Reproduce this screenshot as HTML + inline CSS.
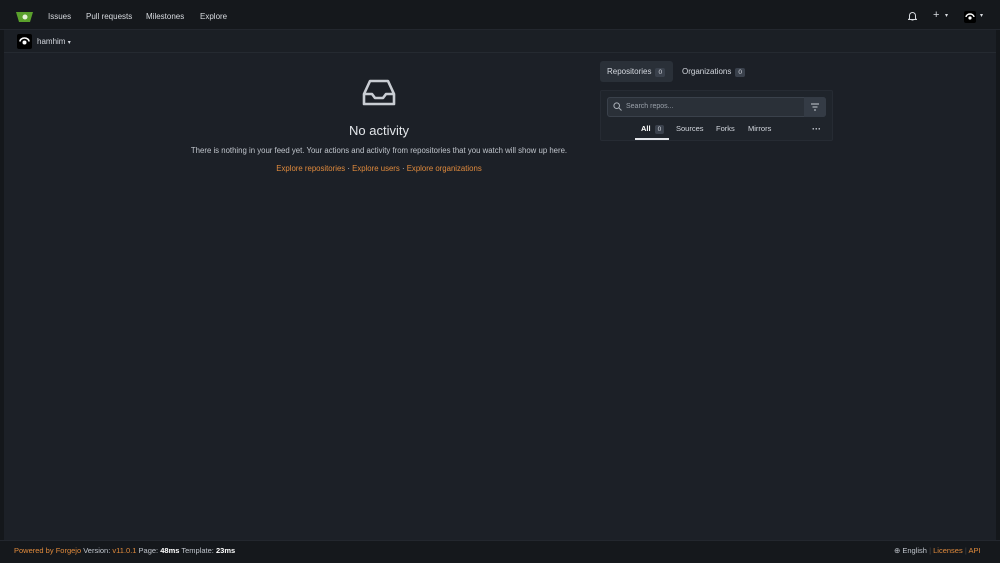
<!DOCTYPE html><html><head><style>
*{box-sizing:border-box;margin:0;padding:0}
body{width:1000px;height:563px;background:#14171b;font-family:"Liberation Sans",sans-serif;color:#d3d7de;font-size:8px;position:relative;overflow:hidden}
.main{position:absolute;left:4px;top:30px;width:992px;height:510px;background:#1c2027}
.nav{position:absolute;left:0;top:0;width:1000px;height:30px;background:#15181c;border-bottom:1px solid #23272e}
.nav span{position:absolute;top:12px;font-size:8px;color:#d8dbe0}
.sub{position:absolute;left:4px;top:30px;width:992px;height:23px;border-bottom:1px solid #252a31;background:#1b1f25}
.foot{position:absolute;left:0;top:540px;width:1000px;height:23px;background:#15181c;border-top:1px solid #23272e}
.o{color:#e08a3c}
.badge{display:inline-block;background:#3a414c;color:#d3d7de;font-size:6.5px;padding:1px 3px;border-radius:2px;margin-left:4px}
</style></head><body>
<div class="main"></div>
<div class="nav">
<svg style="position:absolute;left:16px;top:11px" width="17" height="12" viewBox="0 0 17 12"><path d="M0 1h17l-3 10H3z" fill="#5aa02c"/><circle cx="9" cy="6" r="2.5" fill="#e6f2d8"/></svg>
<span style="left:48px">Issues</span><span style="left:86px">Pull requests</span><span style="left:146px">Milestones</span><span style="left:200px">Explore</span>
<svg style="position:absolute;left:908px;top:11px" width="9" height="10" viewBox="0 0 9 10"><path d="M1.5 7.5V4.5a3 3 0 016 0v3l1 1h-8zM3.5 9h2" stroke="#d8dbe0" fill="none" stroke-width="1"/></svg>
<span style="left:933px;top:9px;font-size:11px">+</span><span style="left:945px;top:12px;font-size:6px">▾</span>
<div style="position:absolute;left:964px;top:11px;width:12px;height:12px;background:#000;border-radius:2px"><svg width="12" height="12" viewBox="0 0 12 12"><path d="M2 6a4 3 0 018 0" stroke="#fff" fill="none" stroke-width="1.4"/><circle cx="6" cy="7" r="1.6" fill="#fff"/></svg></div>
<span style="left:980px;top:12px;font-size:6px">▾</span>
</div>
<div class="sub">
<div style="position:absolute;left:13px;top:4px;width:15px;height:15px;background:#000;border-radius:2px"><svg width="15" height="15" viewBox="0 0 15 15"><path d="M3 7.5a4.5 3.5 0 019 0" stroke="#fff" fill="none" stroke-width="1.6"/><circle cx="7.5" cy="8.5" r="2" fill="#fff"/></svg></div>
<span style="position:absolute;left:33px;top:7px;font-size:8px">hamhim <span style="font-size:6px">▾</span></span>
</div>
<svg style="position:absolute;left:362px;top:78px" width="34" height="30" viewBox="0 0 34 30"><path d="M2 16L8 3h18l6 13v10H2zM2 16h8l3 4h8l3-4h8" stroke="#c9cdd3" stroke-width="2.6" fill="none" stroke-linejoin="round"/></svg>
<div style="position:absolute;left:279px;top:123px;width:200px;text-align:center;font-size:13px;color:#e3e6ea">No activity</div>
<div style="position:absolute;left:179px;top:146px;width:400px;text-align:center;font-size:7.8px;color:#c0c5cc">There is nothing in your feed yet. Your actions and activity from repositories that you watch will show up here.</div>
<div style="position:absolute;left:179px;top:164px;width:400px;text-align:center;font-size:7.8px;color:#c0c5cc"><span class="o">Explore repositories</span> · <span class="o">Explore users</span> · <span class="o">Explore organizations</span></div>
<div style="position:absolute;left:600px;top:61px;width:73px;height:21px;background:#2a3038;border-radius:3px"></div>
<span style="position:absolute;left:607px;top:67px;font-size:8px">Repositories<span class="badge">0</span></span>
<span style="position:absolute;left:682px;top:67px;font-size:8px">Organizations<span class="badge">0</span></span>
<div style="position:absolute;left:600px;top:90px;width:233px;height:51px;background:#1f242b;border:1px solid #262b33;border-radius:2px"></div>
<div style="position:absolute;left:607px;top:97px;width:219px;height:20px;background:#2a3038;border:1px solid #3a414b;border-radius:3px"></div>
<div style="position:absolute;left:804px;top:97px;width:22px;height:20px;background:#343b45;border-radius:0 3px 3px 0"></div>
<svg style="position:absolute;left:810px;top:103px" width="10" height="8" viewBox="0 0 10 8"><path d="M1 1h8M2.5 4h5M4 7h2" stroke="#c9cdd3" stroke-width="1"/></svg>
<svg style="position:absolute;left:613px;top:102px" width="9" height="9" viewBox="0 0 9 9"><circle cx="3.7" cy="3.7" r="2.8" stroke="#aab0b8" fill="none"/><path d="M5.8 5.8L8.5 8.5" stroke="#aab0b8"/></svg>
<span style="position:absolute;left:626px;top:103px;font-size:7px;color:#9aa1aa">Search repos...</span>
<span style="position:absolute;left:641px;top:124px;font-size:7.5px;color:#fff;font-weight:bold">All<span class="badge" style="font-weight:normal">0</span></span>
<div style="position:absolute;left:635px;top:138px;width:34px;height:2px;background:#e3e6ea"></div>
<span style="position:absolute;left:676px;top:124px;font-size:7.5px">Sources</span>
<span style="position:absolute;left:716px;top:124px;font-size:7.5px">Forks</span>
<span style="position:absolute;left:748px;top:124px;font-size:7.5px">Mirrors</span>
<span style="position:absolute;left:812px;top:124px;font-size:9px;font-weight:bold">···</span>
<div class="foot">
<span style="position:absolute;left:14px;top:5px;font-size:7.5px;color:#c0c5cc"><span class="o">Powered by Forgejo</span> Version: <span class="o">v11.0.1</span> Page: <b style="color:#fff">48ms</b> Template: <b style="color:#fff">23ms</b></span>
<span style="position:absolute;left:894px;top:5px;font-size:7.5px;color:#c0c5cc">⊕ English <span style="color:#444">|</span> <span class="o">Licenses</span> <span style="color:#444">|</span> <span class="o">API</span></span>
</div>
</body></html>
